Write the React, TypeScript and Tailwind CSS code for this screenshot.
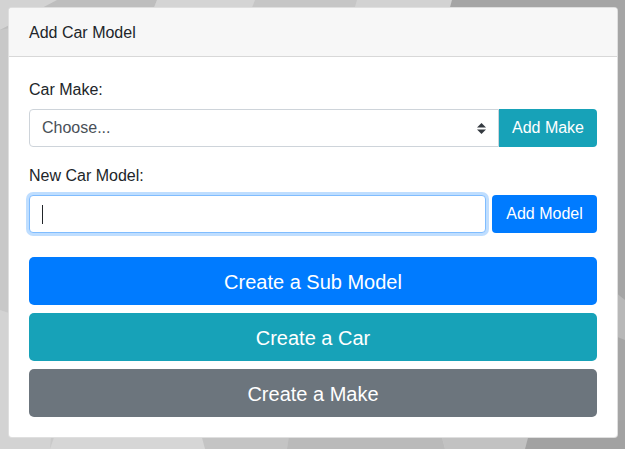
const font = { fontFamily: '"Liberation Sans", Arial, sans-serif' }

// low-poly backdrop behind the card
const Backdrop = () => (
  <svg className="absolute inset-0 h-full w-full" viewBox="0 0 625 449" preserveAspectRatio="none">
    <rect width="625" height="449" fill="#c9c9c9" />
    <polygon points="0,0 60,0 0,30" fill="#d3d3d3" />
    <polygon points="57,0 157,0 110,120 0,30" fill="#bebebe" />
    <polygon points="157,0 257,0 200,140 110,120" fill="#d4d4d4" />
    <polygon points="255,0 357,0 320,130 200,140" fill="#c6c6c6" />
    <polygon points="357,0 452,0 420,120 320,130" fill="#d2d2d2" />
    <polygon points="452,0 625,0 625,449 560,449 600,300 420,120" fill="#a5a5a5" />
    <polygon points="600,280 625,300 625,340 600,330" fill="#b8b8b8" />
    <polygon points="0,30 20,26 10,320 0,320" fill="#c8c8c8" />
    <polygon points="0,310 60,330 50,449 0,449" fill="#d3d3d3" />
    <polygon points="50,449 60,420 205,430 215,449" fill="#d6d6d6" />
    <polygon points="205,449 200,430 290,430 287,449" fill="#c4c4c4" />
    <polygon points="287,449 290,430 440,430 445,449" fill="#bababa" />
    <polygon points="445,449 440,430 530,430 525,449" fill="#c2c2c2" />
    <polygon points="525,449 530,430 625,420 625,449" fill="#a2a2a2" />
  </svg>
)

const SelectArrows = () => (
  <svg className="absolute right-[12px] top-[13px] h-[11px] w-[9px]" viewBox="0 0 9 11">
    <polygon points="4.5,0 9,4.5 0,4.5" fill="#343a40" />
    <polygon points="0,6.5 9,6.5 4.5,11" fill="#343a40" />
  </svg>
)

export default function App() {
  return (
    <div className="relative min-h-[449px] w-[625px] overflow-hidden text-[#212529]" style={font}>
      <Backdrop />
      <div className="relative pl-[8px] pr-[7px] pt-[7px]">
        <div className="overflow-hidden rounded-[4px] border border-black/[.125] bg-white">
          <div className="border-b border-black/[.125] bg-[#f7f7f7] px-[20px] pb-[11px] pt-[13px] text-[16px] leading-[24px]">
            Add Car Model
          </div>
          <div className="flex flex-col p-[20px]">
            <label className="mb-[8px] pt-[1px] text-[16px] leading-[23px]">Car Make:</label>
            <div className="flex">
              <div className="relative flex h-[38px] flex-1 items-center rounded-l-[4px] border border-[#ced4da] bg-white px-[12px] text-[16px] text-[#495057]">
                Choose...
                <SelectArrows />
              </div>
              <button className="h-[38px] w-[98px] rounded-r-[4px] bg-[#17a2b8] text-[16px] text-white">Add Make</button>
            </div>

            <label className="mb-[8px] mt-[16px] pt-[1px] text-[16px] leading-[23px]">New Car Model:</label>
            <div className="flex gap-[6px]">
              <div className="relative h-[38px] flex-1 rounded-[4px] border border-[#80bdff] bg-white shadow-[0_0_0_3px_rgba(0,123,255,0.25)]">
                <span className="absolute left-[12px] top-[9px] h-[19px] w-px bg-[#212529]" />
              </div>
              <button className="h-[38px] w-[105px] rounded-[4px] bg-[#007bff] text-[16px] text-white">Add Model</button>
            </div>

            <button className="mt-[24px] h-[48px] rounded-[5px] bg-[#007bff] pt-[1px] text-[20px] text-white">Create a Sub Model</button>
            <button className="mt-[8px] h-[48px] rounded-[5px] bg-[#17a2b8] pt-[1px] text-[20px] text-white">Create a Car</button>
            <button className="mt-[8px] h-[48px] rounded-[5px] bg-[#6c757d] pt-[1px] text-[20px] text-white">Create a Make</button>
          </div>
        </div>
      </div>
    </div>
  )
}
